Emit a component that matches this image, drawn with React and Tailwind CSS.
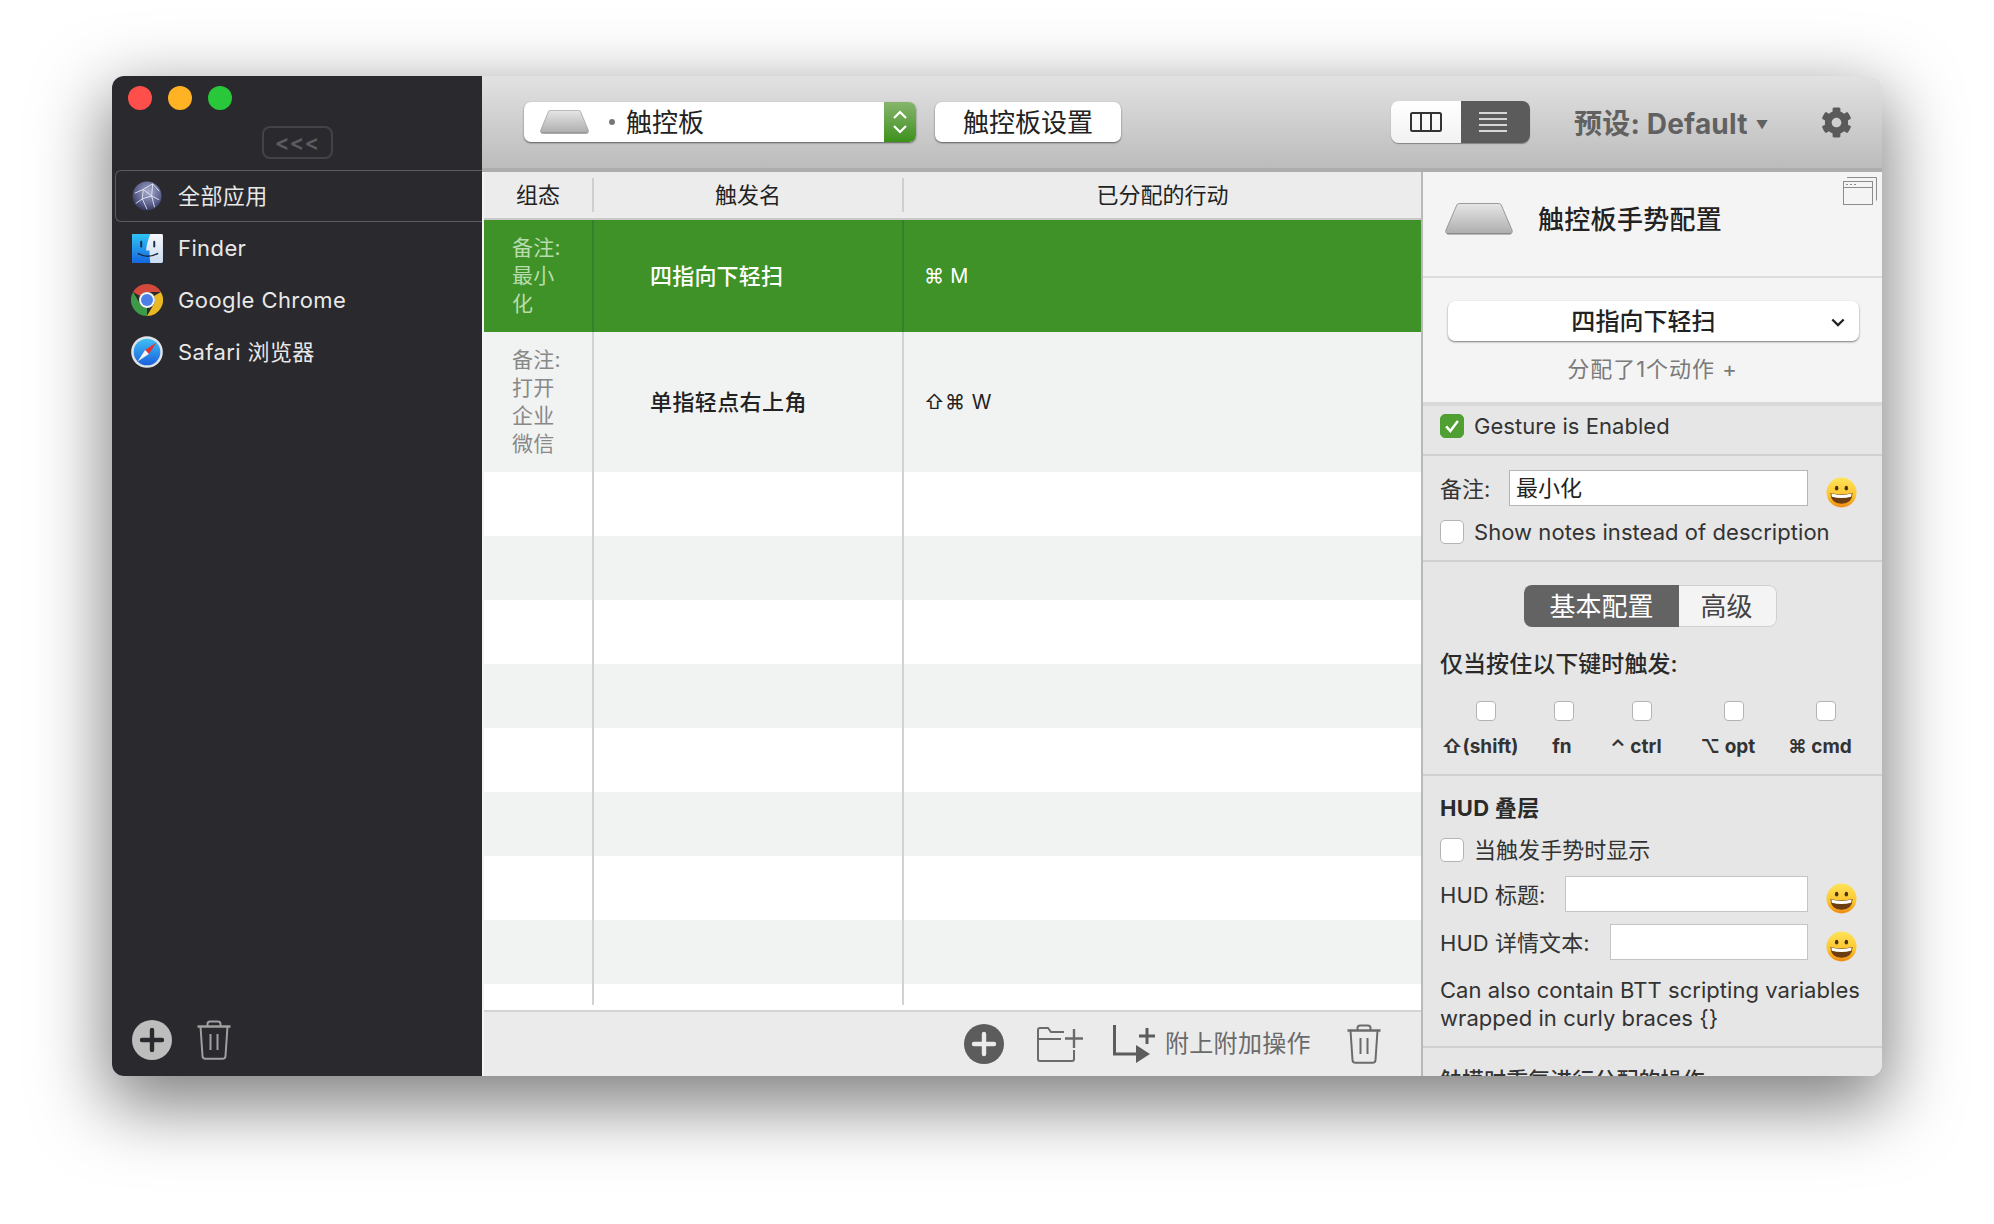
import { FaCog } from 'react-icons/fa';

const Trash = ({ color, className }) => (
  <svg viewBox="0 0 34 40" className={className} fill="none" stroke={color} strokeWidth="2">
    <path d="M0.5 6.5H33.5" strokeWidth="2.4" />
    <path d="M10.5 6V4Q10.5 1.5 13 1.5H21Q23.5 1.5 23.5 4V6" />
    <path d="M3.5 6.5L5.5 36Q5.6 38.8 8.5 38.8H25.5Q28.4 38.8 28.5 36L30.5 6.5" />
    <path d="M13.5 14V30M20.5 14V30" />
  </svg>
);

const PlusCircle = ({ bg, fg }) => (
  <svg viewBox="0 0 40 40" className="w-10 h-10 shrink-0">
    <circle cx="20" cy="20" r="20" fill={bg} />
    <path d="M20 10V30M10 20H30" stroke={fg} strokeWidth="4.4" strokeLinecap="round" />
  </svg>
);

const Trackpad = ({ className }) => (
  <svg viewBox="0 0 68 32" className={className} preserveAspectRatio="none">
    <defs>
      <linearGradient id="padFill" x1="0" y1="0" x2="0" y2="1">
        <stop offset="0" stopColor="#e6e6e6" />
        <stop offset="1" stopColor="#adadad" />
      </linearGradient>
    </defs>
    <path d="M12 1.5Q13 0.5 15 0.5H53Q55 0.5 56 1.5L67 27Q68 31 64 31H4Q0 31 1 27Z" fill="url(#padFill)" stroke="#9a9a9a" strokeWidth="1" />
    <path d="M2 30.6H66" stroke="#8a8a8a" strokeWidth="1.2" />
  </svg>
);

const Emoji = () => (
  <svg viewBox="0 0 32 32" className="w-[31px] h-[31px] shrink-0">
    <defs>
      <linearGradient id="emojiFill" x1="0" y1="0" x2="0" y2="1">
        <stop offset="0" stopColor="#ffe35a" />
        <stop offset="0.6" stopColor="#fdc62e" />
        <stop offset="1" stopColor="#f08a12" />
      </linearGradient>
    </defs>
    <circle cx="16" cy="16" r="15.5" fill="url(#emojiFill)" />
    <ellipse cx="11" cy="11.5" rx="1.8" ry="2.4" fill="#4a3410" />
    <ellipse cx="21" cy="11.5" rx="1.8" ry="2.4" fill="#4a3410" />
    <path d="M4.5 16.5Q16 19.5 27.5 16.5Q27 27.5 16 27.5Q5 27.5 4.5 16.5Z" fill="#6b3d10" />
    <path d="M5.5 17Q16 20 26.5 17L26 20.5Q16 23 6 20.5Z" fill="#ffffff" />
  </svg>
);

const GlobeIcon = () => (
  <svg viewBox="0 0 32 32" className="w-[30px] h-[30px]">
    <defs>
      <radialGradient id="globeFill" cx="0.55" cy="0.35" r="0.75">
        <stop offset="0" stopColor="#a9aed0" />
        <stop offset="0.6" stopColor="#5a5f8c" />
        <stop offset="1" stopColor="#23253f" />
      </radialGradient>
    </defs>
    <circle cx="16" cy="16" r="15.5" fill="url(#globeFill)" />
    <path d="M3 13L12 9L22 3M12 9L11 19L4 24M11 19L21 16L29 20M21 16L22 3M21 16L24 28M11 19L16 30M12 9L21 16M22 3L29 11" stroke="#eef0fa" strokeWidth="0.9" fill="none" />
  </svg>
);

const FinderIcon = () => (
  <svg viewBox="0 0 32 30" className="w-[31px] h-[29px]">
    <defs>
      <linearGradient id="finderL" x1="0" y1="0" x2="0" y2="1">
        <stop offset="0" stopColor="#2fc4f5" />
        <stop offset="1" stopColor="#1467e0" />
      </linearGradient>
      <linearGradient id="finderR" x1="0" y1="0" x2="0" y2="1">
        <stop offset="0" stopColor="#f6f8fa" />
        <stop offset="1" stopColor="#c9dcf0" />
      </linearGradient>
    </defs>
    <rect width="32" height="30" rx="1.5" fill="url(#finderR)" />
    <path d="M1.5 0H19Q15 10 14.5 17H18Q18 24 19 30H1.5Q0 30 0 28.5V1.5Q0 0 1.5 0Z" fill="url(#finderL)" />
    <path d="M9.5 8V13M23 8V13" stroke="#1c2a44" strokeWidth="2" strokeLinecap="round" />
    <path d="M6 20Q16 26 27 20" stroke="#1c2a44" strokeWidth="1.4" fill="none" />
  </svg>
);

const chromeWedge = 'M17 0A17 17 0 0 1 31.72 8.5H17A8.5 8.5 0 0 0 9.64 12.75L2.28 8.5A17 17 0 0 1 17 0Z';

const ChromeIcon = () => (
  <svg viewBox="0 0 34 34" className="w-[34px] h-[34px]">
    <path d={chromeWedge} fill="#d34a3c" />
    <path d={chromeWedge} fill="#e8b923" transform="rotate(120 17 17)" />
    <path d={chromeWedge} fill="#3d9b47" transform="rotate(240 17 17)" />
    <circle cx="17" cy="17" r="8.5" fill="#f2f2f2" />
    <circle cx="17" cy="17" r="6.4" fill="#4a80e8" />
  </svg>
);

const SafariIcon = () => (
  <svg viewBox="0 0 34 34" className="w-[34px] h-[34px]">
    <defs>
      <linearGradient id="safariFill" x1="0" y1="0" x2="0" y2="1">
        <stop offset="0" stopColor="#3fc0f5" />
        <stop offset="1" stopColor="#1a60dc" />
      </linearGradient>
    </defs>
    <circle cx="17" cy="17" r="16.8" fill="#dfe3e8" />
    <circle cx="17" cy="17" r="14.2" fill="url(#safariFill)" />
    <path d="M27 7L15 15L19 19Z" fill="#e8332c" />
    <path d="M7 27L19 19L15 15Z" fill="#f4f4f4" />
  </svg>
);

const Check = ({ on, small }) => (
  <div className={`${small ? 'w-5 h-5' : 'w-6 h-6'} shrink-0 flex items-center justify-center border ${small ? 'rounded-[4px]' : 'rounded-[5px]'} ${on ? 'bg-[#4f9f32] border-[#4f9f32]' : 'bg-white border-[#b4b4b4]'}`}>
    {on && (
      <svg viewBox="0 0 24 24" className="w-5 h-5" fill="none" stroke="white" strokeWidth="3">
        <path d="M5 12.5L10 18L19 6" />
      </svg>
    )}
  </div>
);

const apps = [
  { icon: FinderIcon, label: 'Finder' },
  { icon: ChromeIcon, label: 'Google Chrome' },
  { icon: SafariIcon, label: 'Safari 浏览器' },
];

const modifiers = [
  { label: '⇧(shift)', width: 'w-[92px]', shift: 'pr-[12px]' },
  { label: 'fn', width: 'w-[64px]', shift: 'pr-[4px]' },
  { label: '⌃ ctrl', width: 'w-[92px]', shift: 'pr-[12px]' },
  { label: '⌥ opt', width: 'w-[92px]', shift: 'pr-[12px]' },
  { label: '⌘ cmd', width: 'w-[92px]', shift: 'pr-[12px]' },
];

const stripes = ['bg-white', 'bg-[#f1f3f3]', 'bg-white', 'bg-[#f1f3f3]', 'bg-white', 'bg-[#f1f3f3]', 'bg-white', 'bg-[#f1f3f3]'];

export default function App() {
  return (
    <div className="w-[1994px] h-[1224px] bg-white pt-[76px] pl-[112px] overflow-hidden font-[Inter,'Noto_Sans_CJK_SC','DejaVu_Sans',sans-serif]">
      <div className="w-[1770px] h-[1000px] flex rounded-[12px] overflow-hidden shadow-[0_24px_70px_6px_rgba(0,0,0,0.5)]">
        {/* Sidebar */}
        <aside className="w-[370px] shrink-0 bg-[#2a292e] flex flex-col text-[#e8e8e8]">
          <div className="flex gap-4 pt-[10px] pl-4">
            <div className="w-6 h-6 rounded-full bg-[#ff4f4a]" />
            <div className="w-6 h-6 rounded-full bg-[#ffb224]" />
            <div className="w-6 h-6 rounded-full bg-[#28c83a]" />
          </div>
          <div className="mt-4 mx-auto w-[71px] h-[33px] rounded-[8px] border-2 border-[#434347] flex items-center justify-center text-[#5b5b60] text-[22px] font-semibold">
            &lt;&lt;&lt;
          </div>
          <div className="mt-[11px] ml-[3px] h-[52px] flex items-center gap-[15px] pl-[15px] border border-r-0 border-[#5c5c60] rounded-l-[6px]">
            <div className="w-8 flex justify-center"><GlobeIcon /></div>
            <span className="text-[22px] tracking-[0.4px]">全部应用</span>
          </div>
          {apps.map((app) => {
            const Icon = app.icon;
            return (
              <div key={app.label} className="h-[52px] flex items-center gap-[15px] ml-[3px] pl-[16px]">
                <div className="w-8 flex justify-center"><Icon /></div>
                <span className="mt-[1px] text-[22px] tracking-[0.4px]">{app.label}</span>
              </div>
            );
          })}
          <div className="mt-auto flex items-center gap-[25px] pl-5 pb-[16px]">
            <PlusCircle bg="#bdbdbd" fg="#2a292e" />
            <Trash color="#a0a0a0" className="w-[34px] h-10" />
          </div>
        </aside>

        <div className="flex-1 flex flex-col min-w-0">
          {/* Toolbar */}
          <header className="h-[96px] shrink-0 flex items-center pl-[42px] pr-[30px] bg-gradient-to-b from-[#e2e2e2] to-[#bcbcbc] border-b-[4px] border-[#adadad]">
            <div className="w-[392px] h-10 shrink-0 flex bg-white rounded-[7px] shadow-[0_1px_2px_rgba(0,0,0,0.55)] overflow-hidden">
              <div className="flex-1 flex items-center pl-[16px] text-[26px] text-[#222]">
                <Trackpad className="w-[49px] h-6" />
                <span className="ml-[20px] mr-[11px] w-[6px] h-[6px] rounded-full bg-[#777]" />
                <span>触控板</span>
              </div>
              <div className="w-[32px] bg-gradient-to-b from-[#86b56b] to-[#3b9117] flex items-center justify-center">
                <svg viewBox="0 0 16 26" className="w-4 h-[26px]" fill="none" stroke="white" strokeWidth="2.2">
                  <path d="M2 9L8 3L14 9M2 17L8 23L14 17" />
                </svg>
              </div>
            </div>
            <button className="ml-[19px] w-[186px] h-10 shrink-0 bg-white rounded-[7px] shadow-[0_1px_2px_rgba(0,0,0,0.55)] text-[26px] text-[#222]">
              触控板设置
            </button>
            <div className="ml-[270px] w-[139px] h-[42px] shrink-0 flex rounded-[8px] overflow-hidden shadow-[0_1px_1px_rgba(0,0,0,0.35)]">
              <div className="w-[70px] bg-gradient-to-b from-white to-[#f2f2f2] flex items-center justify-center">
                <svg viewBox="0 0 32 20" className="w-8 h-5" fill="none" stroke="#333" strokeWidth="2">
                  <rect x="1" y="1" width="30" height="18" rx="1.5" />
                  <path d="M11 1V19M21 1V19" />
                </svg>
              </div>
              <div className="flex-1 bg-[#5b5b5b] flex items-center justify-center pr-[5px]">
                <svg viewBox="0 0 28 20" className="w-7 h-5" stroke="white" strokeWidth="1.6">
                  <path d="M0 1H28M0 7H28M0 13H28M0 19H28" />
                </svg>
              </div>
            </div>
            <div className="ml-[44px] pt-[3px] flex items-center text-[#616161] text-[28px] font-bold tracking-[0.2px] whitespace-nowrap">
              <span>预设: Default</span>
              <span className="ml-[8px] mt-[3px] text-[12px]">▼</span>
            </div>
            <FaCog className="ml-auto w-[31px] h-[31px] text-[#5a5a5a]" />
          </header>

          <div className="flex-1 flex min-h-0">
            {/* Table */}
            <section className="w-[939px] shrink-0 flex flex-col border-l-2 border-[#f4f4f4] bg-[#ebebeb]">
              <div className="h-[46px] shrink-0 grid grid-cols-[110px_310px_1fr] items-center bg-[#ececec] text-[22px] text-[#222] border-b-2 border-[#c9c9c9] box-content">
                <div className="h-[34px] flex items-center justify-center border-r-2 border-[#cfcfcf]">组态</div>
                <div className="h-[34px] flex items-center justify-center border-r-2 border-[#cfcfcf]">触发名</div>
                <div className="text-center">已分配的行动</div>
              </div>
              <div className="h-[112px] shrink-0 grid grid-cols-[110px_310px_1fr] bg-[#3f9228] text-white">
                <div className="border-r-2 border-[#35802a] pl-[28px] flex items-center text-[21px] tracking-[0.3px] leading-[28px] text-[#b9dcae]">
                  <div>备注:<br />最小<br />化</div>
                </div>
                <div className="border-r-2 border-[#35802a] pl-[56px] flex items-center text-[22px] font-medium tracking-[0.2px]">四指向下轻扫</div>
                <div className="pl-[20px] flex items-center text-[20px] tracking-[0.3px]">⌘ M</div>
              </div>
              <div className="h-[140px] shrink-0 grid grid-cols-[110px_310px_1fr] bg-[#f1f3f3] text-[#222]">
                <div className="border-r-2 border-[#d2d2d2] pl-[28px] flex items-center text-[21px] tracking-[0.3px] leading-[28px] text-[#888]">
                  <div>备注:<br />打开<br />企业<br />微信</div>
                </div>
                <div className="border-r-2 border-[#d2d2d2] pl-[56px] flex items-center text-[22px] font-medium tracking-[0.4px]">单指轻点右上角</div>
                <div className="pl-[20px] flex items-center text-[20px] tracking-[0.5px]">⇧⌘ W</div>
              </div>
              {stripes.map((bg, i) => (
                <div key={i} className={`h-[64px] shrink-0 grid grid-cols-[110px_310px_1fr] ${bg}`}>
                  <div className="border-r-2 border-[#d2d2d2]" />
                  <div className="border-r-2 border-[#d2d2d2]" />
                  <div />
                </div>
              ))}
              <div className="h-[26px] shrink-0 grid grid-cols-[110px_310px_1fr] bg-white">
                <div className="h-[21px] border-r-2 border-[#d2d2d2]" />
                <div className="h-[21px] border-r-2 border-[#d2d2d2]" />
                <div />
              </div>
              {/* Table footer */}
              <div className="flex-1 flex items-center border-t-2 border-[#d4d4d4] text-[#666] pl-[480px]">
                <PlusCircle bg="#5c5c5c" fg="#ebebeb" />
                <svg viewBox="0 0 46 36" className="ml-[33px] w-[46px] h-9" fill="none" stroke="#6b6b6b" strokeWidth="2">
                  <path d="M27 6H14L11 2H3Q1 2 1 4V33Q1 35 3 35H35Q37 35 37 33V24" />
                  <path d="M1 13H24" />
                  <path d="M28 12.5H46M37 3V22" strokeWidth="2.4" />
                </svg>
                <svg viewBox="0 0 44 38" className="ml-[30px] w-[44px] h-[38px]">
                  <path d="M1.5 0V29H24" fill="none" stroke="#5c5c5c" strokeWidth="3" />
                  <path d="M23 20L37 29L23 38Z" fill="#5c5c5c" />
                  <path d="M34 3V19M26 11H42" stroke="#5c5c5c" strokeWidth="3" />
                </svg>
                <span className="ml-[8px] text-[24px] tracking-[0.3px] text-[#6a6a6a]">附上附加操作</span>
                <Trash color="#6b6b6b" className="ml-[36px] w-[34px] h-10" />
              </div>
            </section>

            {/* Inspector */}
            <section className="flex-1 min-w-0 overflow-hidden border-l-2 border-[#b9b9b9] bg-[#e6e6e6] text-[#333] text-[22px] tracking-[0.05px]">
              <div className="relative h-[106px] bg-[#f4f4f4] border-b-2 border-[#dcdcdc] flex items-center pl-[22px] pb-[10px]">
                <Trackpad className="w-[68px] h-8" />
                <span className="ml-[25px] text-[26px] font-medium tracking-[0.3px] text-[#222]">触控板手势配置</span>
                <svg viewBox="0 0 34 28" className="absolute top-[5px] right-[5px] w-[34px] h-7" fill="#f4f4f4" stroke="#8c8c8c" strokeWidth="1">
                  <path d="M4 0.5H33.5V23.5" />
                  <rect x="0.5" y="4.5" width="29" height="23" />
                  <path d="M0.5 10.5H29.5" />
                  <path d="M3 7.5H5M7 7.5H9M11 7.5H13" strokeWidth="1.2" />
                </svg>
              </div>
              <div className="h-[128px] bg-[#f4f4f4] border-b-[4px] border-[#d9d9d9] pt-[23px] pl-[25px] flex flex-col">
                <div className="relative w-[411px] h-10 bg-white rounded-[7px] shadow-[0_1px_2px_rgba(0,0,0,0.5)] flex items-center justify-center pt-[2px] text-[24px] font-medium text-[#222] pr-[20px]">
                  四指向下轻扫
                  <svg viewBox="0 0 16 10" className="absolute right-[14px] w-[14px] h-[9px]" fill="none" stroke="#222" strokeWidth="2.6">
                    <path d="M1.5 1.5L8 8L14.5 1.5" />
                  </svg>
                </div>
                <div className="mt-[12px] w-[411px] text-center text-[22px] tracking-[1px] text-[#7a7a7a] pr-[2px]">分配了1个动作 +</div>
              </div>
              <div className="h-[50px] border-b-2 border-[#d0d0d0] flex items-center pl-[17px] pb-[8px] gap-[10px]">
                <Check on />
                <span>Gesture is Enabled</span>
              </div>
              <div className="h-[106px] border-b-2 border-[#d0d0d0] pl-[17px] pt-[14px]">
                <div className="flex items-center h-9">
                  <span className="w-[69px] pt-[2px]">备注:</span>
                  <div className="w-[299px] h-9 bg-white border border-[#b5b5b5] flex items-center pl-[6px] text-[22px] text-[#222]">最小化</div>
                  <div className="ml-[18px] mt-[8px]"><Emoji /></div>
                </div>
                <div className="mt-[14px] h-6 flex items-center gap-[10px]">
                  <Check />
                  <span>Show notes instead of description</span>
                </div>
              </div>
              <div className="h-[214px] border-b-2 border-[#d0d0d0] pl-[17px] pt-[23px]">
                <div className="ml-[84px] w-[253px] h-[42px] flex rounded-[8px] overflow-hidden text-[26px]">
                  <div className="w-[155px] bg-[#636363] text-white flex items-center justify-center">基本配置</div>
                  <div className="flex-1 bg-[#f4f4f4] border border-l-0 border-[#cfcfcf] rounded-r-[8px] flex items-center justify-center pr-[2px] text-[#444]">高级</div>
                </div>
                <div className="mt-[22px] h-[30px] text-[23px] font-medium leading-[30px] text-[#2a2a2a]">仅当按住以下键时触发:</div>
                <div className="mt-[22px] flex">
                  {modifiers.map((m) => (
                    <div key={m.label} className={`${m.width} flex flex-col items-center`}>
                      <Check small />
                      <span className={`mt-[12px] text-[19px] font-bold text-[#333] whitespace-nowrap ${m.shift}`}>{m.label}</span>
                    </div>
                  ))}
                </div>
              </div>
              <div className="h-[272px] border-b-2 border-[#d0d0d0] pl-[17px] pt-[18px]">
                <div className="h-7 flex items-center text-[22px] font-bold tracking-[0.3px] text-[#2a2a2a]">HUD 叠层</div>
                <div className="mt-[16px] h-6 flex items-center gap-[10px]">
                  <Check />
                  <span>当触发手势时显示</span>
                </div>
                <div className="mt-[14px] flex items-center h-9">
                  <span className="w-[125px] pt-[2px] whitespace-nowrap">HUD 标题:</span>
                  <div className="w-[243px] h-9 bg-white border border-[#c4c4c4]" />
                  <div className="ml-[18px] mt-[8px]"><Emoji /></div>
                </div>
                <div className="mt-[12px] flex items-center h-9">
                  <span className="w-[170px] pt-[2px] whitespace-nowrap">HUD 详情文本:</span>
                  <div className="w-[198px] h-9 bg-white border border-[#c4c4c4]" />
                  <div className="ml-[18px] mt-[8px]"><Emoji /></div>
                </div>
                <p className="mt-[16px] leading-[28px] whitespace-nowrap">Can also contain BTT scripting variables<br />wrapped in curly braces {'{}'}</p>
              </div>
              <div className="pl-[17px] pt-[16px] text-[22px] font-medium">触摸时重复进行分配的操作</div>
            </section>
          </div>
        </div>
      </div>
    </div>
  );
}
